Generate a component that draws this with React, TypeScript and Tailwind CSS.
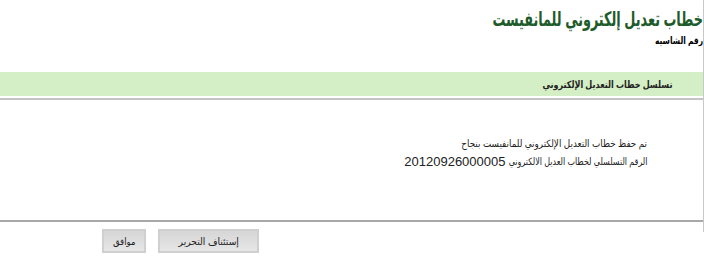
export default function App() {
  const font = { fontFamily: '"Liberation Sans", "DejaVu Sans", Arial, sans-serif' };
  return (
    <div dir="rtl" className="w-[704px] h-[257px] bg-white overflow-hidden text-black" style={font}>
      <div className="h-[232px] w-[704px] border-r border-r-[#c8c8c8] flex flex-col">
        <div className="pt-[6px] whitespace-nowrap">
          <h1 className="text-[20px] leading-[26px] font-bold text-[#1d5b2b]">
            <span className="inline-block origin-right scale-x-[0.64]">خطاب تعديل إلكتروني للمانفيست</span>
          </h1>
          <div className="text-[10px] leading-[14px] font-bold mt-[2px]">
            <span className="inline-block origin-right scale-x-[0.75]">رقم الشاسيه</span>
          </div>
        </div>
        <div className="mt-[24px] h-[24px] bg-[#d4efc6] flex items-center pr-[31px]">
          <span className="inline-block origin-right scale-x-[0.8] text-[10px] font-bold text-[#222]">تسلسل خطاب التعديل الإلكتروني</span>
        </div>
        <div className="mt-[2px] h-[2px] bg-[#c4c4c4]"></div>
        <div className="pt-[37px] pr-[56px] text-[10px] text-[#222] whitespace-nowrap">
          <div className="leading-[14px]">
            <span className="inline-block origin-right scale-x-[0.88]">تم حفظ خطاب التعديل الإلكتروني للمانفيست بنجاح</span>
          </div>
          <div className="mt-[3px] leading-[16px] flex items-center">
            <span className="inline-block origin-right scale-x-[0.8]">الرقم التسلسلي لخطاب العديل الالكتروني</span>
            <span className="text-[13px] mr-[-32px]">20120926000005</span>
          </div>
        </div>
        <div className="flex-1"></div>
        <div className="h-[2px] bg-[#a8a8a8] mb-[10px]"></div>
      </div>
      <div className="flex justify-end gap-[12px] pl-[102px] -mt-[3px]">
        <button className="w-[101px] h-[24px] border-2 border-[#d0d0d0] bg-gradient-to-b from-[#d6d6d6] to-[#e6e6e6] text-[10px] text-[#222] flex items-center justify-center">
          <span className="inline-block scale-x-[0.92]">إستئناف التحرير</span>
        </button>
        <button className="w-[44px] h-[24px] border-2 border-[#d0d0d0] bg-gradient-to-b from-[#d6d6d6] to-[#e6e6e6] text-[10px] text-[#222] flex items-center justify-center">
          <span className="inline-block scale-x-[0.85]">موافق</span>
        </button>
      </div>
    </div>
  );
}
